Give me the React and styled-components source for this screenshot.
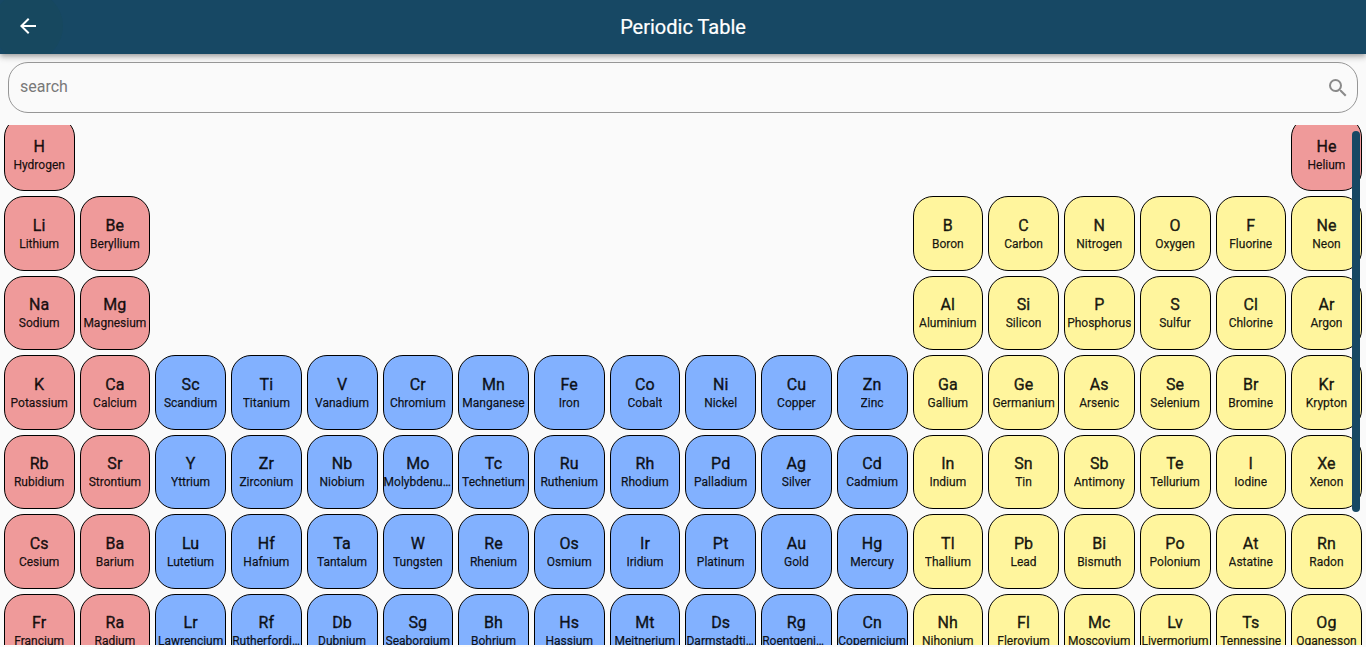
import React from 'react';
import styled, { createGlobalStyle } from 'styled-components';

const GlobalStyle = createGlobalStyle`
  * { box-sizing: border-box; }
  html, body { margin: 0; height: 100%; overflow: hidden; background: #fafafa; }
  body { font-family: Roboto, "Liberation Sans", sans-serif; color: rgba(0, 0, 0, 0.87); }
`;

const Screen = styled.div`
  display: flex;
  flex-direction: column;
  height: 647px;
  background: #fafafa;
`;

const AppBar = styled.header`
  position: relative;
  flex: none;
  display: grid;
  grid-template-columns: 56px 1fr 56px;
  align-items: center;
  height: 54px;
  overflow: hidden;
  background: #174864;
`;

const BarShadow = styled.div`
  flex: none;
  height: 54px;
  box-shadow: 0 2px 4px -1px rgba(0, 0, 0, 0.2), 0 4px 5px rgba(0, 0, 0, 0.14), 0 1px 10px rgba(0, 0, 0, 0.12);
`;

const BackButton = styled.button`
  width: 56px;
  height: 54px;
  padding: 0 0 2px;
  border: 0;
  display: grid;
  place-items: center;
  color: #fff;
  background: none;
  svg { position: relative; }
  &::before {
    content: '';
    position: absolute;
    left: -7px;
    top: -9px;
    width: 70px;
    height: 70px;
    border-radius: 50%;
    background: #17485f;
  }
`;

const Title = styled.h1`
  margin: 0;
  text-align: center;
  font-size: 20px;
  font-weight: 400;
  line-height: 54px;
  color: #fff;
  -webkit-text-stroke: 0.2px currentColor;
`;

const SearchBox = styled.label`
  flex: none;
  display: flex;
  align-items: center;
  justify-content: space-between;
  height: 51px;
  margin: 8px 8px 12px;
  padding: 0 7px 0 11px;
  border: 1px solid #969696;
  border-radius: 20px;
  color: #787878;
  font-size: 16px;
  font-weight: 400;
  span { padding-bottom: 2px; }
`;

const TableViewport = styled.main`
  position: relative;
  height: 520px;
  overflow: hidden;
`;

const Table = styled.div`
  display: grid;
  grid-template-columns: repeat(18, minmax(0, 1fr));
  grid-auto-rows: 74.44px;
  gap: 5px;
  margin: -8px 4px 0;
`;

const tones = { red: '#ef9a9a', blue: '#82b1ff', yellow: '#fff59d' };

const Cell = styled.div`
  grid-column: ${(p) => p.$column};
  grid-row: ${(p) => p.$row};
  display: flex;
  flex-direction: column;
  align-items: center;
  justify-content: center;
  padding: 1.68px 0.4px 0 0;
  border: 1px solid #000;
  border-radius: 20px;
  background: ${(p) => tones[p.$tone]};
`;

const Symbol = styled.div`
  font-size: 16px;
  font-weight: 400;
  line-height: 19px;
  letter-spacing: 0.1px;
  -webkit-text-stroke: 0.4px currentColor;
`;

const Name = styled.div`
  max-width: 100%;
  overflow: hidden;
  white-space: nowrap;
  text-overflow: ellipsis;
  font-size: 12px;
  line-height: 18px;
  -webkit-text-stroke: 0.25px currentColor;
`;

const ScrollThumb = styled.div`
  position: absolute;
  top: 6px;
  right: 6px;
  width: 8px;
  height: 381px;
  border-radius: 4px;
  background: #174864;
`;

const rows = [
  'H Hydrogen,He Helium',
  'Li Lithium,Be Beryllium,B Boron,C Carbon,N Nitrogen,O Oxygen,F Fluorine,Ne Neon',
  'Na Sodium,Mg Magnesium,Al Aluminium,Si Silicon,P Phosphorus,S Sulfur,Cl Chlorine,Ar Argon',
  'K Potassium,Ca Calcium,Sc Scandium,Ti Titanium,V Vanadium,Cr Chromium,Mn Manganese,Fe Iron,Co Cobalt,Ni Nickel,Cu Copper,Zn Zinc,Ga Gallium,Ge Germanium,As Arsenic,Se Selenium,Br Bromine,Kr Krypton',
  'Rb Rubidium,Sr Strontium,Y Yttrium,Zr Zirconium,Nb Niobium,Mo Molybdenum,Tc Technetium,Ru Ruthenium,Rh Rhodium,Pd Palladium,Ag Silver,Cd Cadmium,In Indium,Sn Tin,Sb Antimony,Te Tellurium,I Iodine,Xe Xenon',
  'Cs Cesium,Ba Barium,Lu Lutetium,Hf Hafnium,Ta Tantalum,W Tungsten,Re Rhenium,Os Osmium,Ir Iridium,Pt Platinum,Au Gold,Hg Mercury,Tl Thallium,Pb Lead,Bi Bismuth,Po Polonium,At Astatine,Rn Radon',
  'Fr Francium,Ra Radium,Lr Lawrencium,Rf Rutherfordium,Db Dubnium,Sg Seaborgium,Bh Bohrium,Hs Hassium,Mt Meitnerium,Ds Darmstadtium,Rg Roentgenium,Cn Copernicium,Nh Nihonium,Fl Flerovium,Mc Moscovium,Lv Livermorium,Ts Tennessine,Og Oganesson',
];

const elements = rows.flatMap((row, r) => {
  const items = row.split(',');
  const leading = r === 0 ? 1 : 2;
  return items.map((item, i) => {
    const [symbol, name] = item.split(' ');
    const column = i < leading ? i + 1 : 18 - (items.length - 1 - i);
    const tone = column <= 2 || symbol === 'He' ? 'red' : column <= 12 ? 'blue' : 'yellow';
    return { symbol, name, column, row: r + 1, tone };
  });
});

export default function App() {
  return (
    <>
      <GlobalStyle />
      <Screen>
        <BarShadow>
          <AppBar>
            <BackButton aria-label="Back">
              <svg width="24" height="24" viewBox="0 0 24 24" fill="currentColor">
                <path d="M20 11H7.83l5.59-5.59L12 4l-8 8 8 8 1.41-1.41L7.83 13H20v-2z" />
              </svg>
            </BackButton>
            <Title>Periodic Table</Title>
          </AppBar>
        </BarShadow>
        <SearchBox>
          <span>search</span>
          <svg width="24" height="24" viewBox="0 0 24 24" fill="#8b8b8b">
            <path d="M15.5 14h-.79l-.28-.27A6.47 6.47 0 0 0 16 9.5 6.5 6.5 0 1 0 9.5 16c1.61 0 3.09-.59 4.23-1.57l.27.28v.79l5 4.99L20.49 19l-4.99-5zm-6 0C7.01 14 5 11.99 5 9.5S7.01 5 9.5 5 14 7.01 14 9.5 11.99 14 9.5 14z" />
          </svg>
        </SearchBox>
        <TableViewport>
          <Table>
            {elements.map((e) => (
              <Cell key={e.symbol} $column={e.column} $row={e.row} $tone={e.tone}>
                <Symbol>{e.symbol}</Symbol>
                <Name>{e.name}</Name>
              </Cell>
            ))}
          </Table>
          <ScrollThumb />
        </TableViewport>
      </Screen>
    </>
  );
}
